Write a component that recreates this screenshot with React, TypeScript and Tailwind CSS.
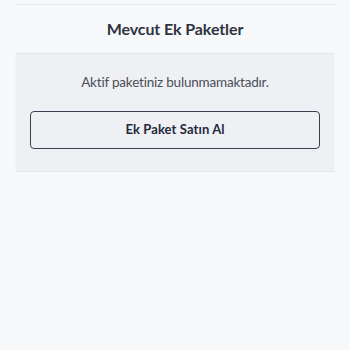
import React from "react";

export default function App() {
  return (
    <div className="w-[350px] h-[350px] bg-[#f7f8fa] overflow-hidden" style={{ fontFamily: "Lato, 'Noto Sans', sans-serif" }}>
      <div className="pt-[4px] px-[15px]">
        <div className="border-t border-[#e6e8ec]" />
        <div className="h-[48px] flex items-center justify-center">
          <h2 className="text-[16px] font-bold text-[#2e3341] tracking-[-0.1px]">Mevcut Ek Paketler</h2>
        </div>
        <div className="bg-[#eff0f4] border-t border-b border-[#e3e5ea] border-x border-x-[#f3f4f7] pt-[18px] pb-[22px] px-[14px]">
          <p className="text-center text-[13.5px] text-[#4a4e58] leading-[20px] tracking-[-0.2px]">Aktif paketiniz bulunmamaktadır.</p>
          <button className="mt-[19px] w-full h-[38px] border border-[#3a4250] rounded-[4px] text-[13px] font-bold text-[#1f2a3c] tracking-[0.1px] flex items-center justify-center">
            Ek Paket Satın Al
          </button>
        </div>
      </div>
    </div>
  );
}
